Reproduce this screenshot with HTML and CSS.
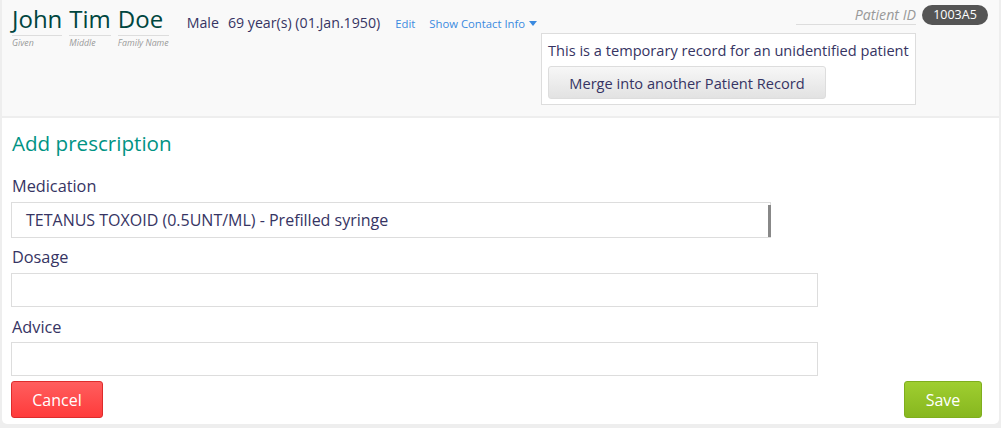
FILE: index.html
```html
<!DOCTYPE html>
<html>
<head>
<meta charset="utf-8">
<link rel="stylesheet" href="styles.css">
</head>
<body>
<div class="page">
  <header class="patient-header">
    <div class="name-block">
      <div class="name-part given"><span class="name-text">John</span><em class="name-label">Given</em></div>
      <div class="name-part middle"><span class="name-text">Tim</span><em class="name-label">Middle</em></div>
      <div class="name-part family"><span class="name-text">Doe</span><em class="name-label">Family Name</em></div>
    </div>
    <div class="demographics">
      <span class="gender">Male</span>
      <span class="age">69 year(s) (01.Jan.1950)</span>
      <a class="link edit">Edit</a>
      <a class="link contact">Show Contact Info <span class="caret"></span></a>
    </div>
    <div class="right-col">
      <div class="identifier-row">
        <em class="id-label">Patient ID</em>
        <span class="id-badge">1003A5</span>
      </div>
      <div class="temp-box">
        <div class="temp-text">This is a temporary record for an unidentified patient</div>
        <button class="merge-btn">Merge into another Patient Record</button>
      </div>
    </div>
  </header>
  <main class="content">
    <h2 class="title">Add prescription</h2>
    <div class="field first">
      <label class="label">Medication</label>
      <div class="select">TETANUS TOXOID (0.5UNT/ML) - Prefilled syringe<span class="select-edge"></span></div>
    </div>
    <div class="field">
      <label class="label">Dosage</label>
      <div class="input"></div>
    </div>
    <div class="field last">
      <label class="label">Advice</label>
      <div class="input"></div>
    </div>
    <div class="actions">
      <button class="btn cancel">Cancel</button>
      <button class="btn save">Save</button>
    </div>
  </main>
</div>
</body>
</html>
```
FILE: styles.css
```css
* { box-sizing: border-box; }
html, body { margin: 0; padding: 0; }
body {
  background: #eeeeee;
  font-family: "Open Sans", sans-serif;
  color: #363463;
  width: 1001px;
  height: 428px;
  overflow: hidden;
}
.page {
  margin: 0 2px 0 2px;
  background: #ffffff;
  height: 424px;
  border-radius: 0 0 5px 5px;
}
.patient-header {
  background: #f9f9f9;
  border-bottom: 2px solid #eeeeee;
  height: 118px;
  display: flex;
  align-items: flex-start;
  padding-left: 10px;
}
.name-block {
  display: flex;
  gap: 7px;
  padding-top: 3px;
}
.name-part {
  display: flex;
  flex-direction: column;
}
.name-text {
  font-size: 24px;
  line-height: 32px;
  color: #00463f;
  border-bottom: 1px solid #dddddd;
}
.name-label {
  font-size: 8.8px;
  line-height: 13px;
  color: #999999;
  padding-top: 1px;
}
.demographics {
  margin-left: 18px;
  padding-top: 13px;
  font-size: 14.2px;
  line-height: 20px;
  display: flex;
  align-items: baseline;
}
.gender { margin-right: 9px; }
.link {
  color: #3b8ae0;
  font-size: 11.3px;
  margin-left: 15px;
  cursor: pointer;
}
.contact { margin-left: 14px; }
.caret {
  display: inline-block;
  width: 0; height: 0;
  border-left: 4.5px solid transparent;
  border-right: 4.5px solid transparent;
  border-top: 5px solid #3b8ae0;
  vertical-align: 2px;
  margin-left: 1px;
}
.right-col {
  margin-left: auto;
  display: flex;
  flex-direction: column;
  align-items: flex-end;
  padding-right: 11px;
  padding-top: 5px;
}
.identifier-row {
  display: flex;
  align-items: center;
  gap: 6px;
}
.id-label {
  font-size: 14.2px;
  color: #999999;
  border-bottom: 1px solid #dddddd;
  width: 120px;
  text-align: right;
  line-height: 19px;
}
.id-badge {
  background: #555555;
  color: #ffffff;
  font-size: 12.5px;
  line-height: 20px;
  padding: 0 4px;
  border-radius: 10px;
  width: 66px;
  text-align: center;
}
.temp-box {
  margin-top: 8px;
  margin-right: 72px;
  width: 375px;
  background: #ffffff;
  border: 1px solid #dddddd;
  padding: 6px 5px 5px 6px;
}
.temp-text {
  font-size: 14.6px;
  line-height: 20px;
  margin-bottom: 6px;
}
.merge-btn {
  font-family: "Open Sans", sans-serif;
  font-size: 14.6px;
  color: #363463;
  height: 33px;
  width: 278px;
  border: 1px solid #dddddd;
  border-radius: 3px;
  background: linear-gradient(#f7f7f7, #e2e2e2);
  padding: 0;
}
.content {
  padding: 8px 9px 0 9px;
}
.title {
  margin: 0;
  font-weight: normal;
  font-size: 20.6px;
  line-height: 34px;
  color: #009384;
  padding-left: 1px;
}
.field { display: flex; flex-direction: column; }
.label {
  font-size: 16.3px;
  line-height: 22px;
  padding-left: 1px;
  margin-top: 8px;
}
.field.first .label { margin-top: 15px; }
.field.last .label { margin-top: 9px; }
.select {
  margin-top: 5px;
  width: 760px;
  height: 36px;
  border: 1px solid #dddddd;
  font-size: 16px;
  line-height: 34px;
  padding-left: 14px;
  position: relative;
  color: #363463;
}
.select-edge {
  position: absolute;
  right: -1px;
  top: 2px;
  bottom: 0;
  width: 3px;
  background: #888888;
}
.input {
  margin-top: 5px;
  width: 807px;
  height: 34px;
  border: 1px solid #dddddd;
  background: #ffffff;
}
.field.last .input { margin-top: 4px; }
.actions {
  display: flex;
  justify-content: space-between;
  margin-top: 5px;
  padding-right: 8px;
}
.btn {
  font-family: "Open Sans", sans-serif;
  font-size: 16px;
  height: 37px;
  border-radius: 3px;
  color: #ffffff;
}
.cancel {
  width: 92px;
  background: linear-gradient(#ff5e5e, #ff3b3b);
  border: 1px solid #dd2c2c;
}
.save {
  width: 78px;
  background: linear-gradient(#9fce30, #87b71f);
  border: 1px solid #7fae1d;
}
```
